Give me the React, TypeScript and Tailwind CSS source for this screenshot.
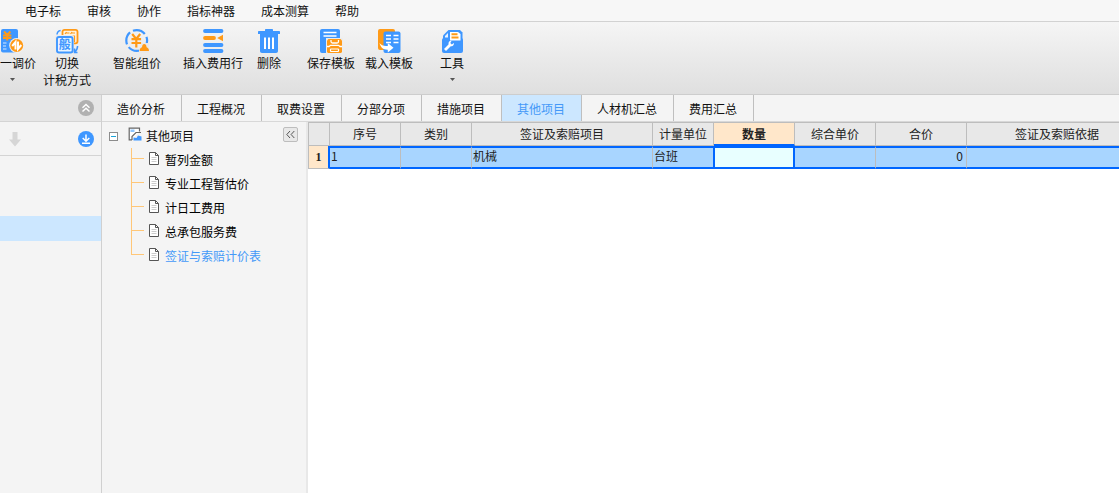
import type { ReactNode } from 'react';
import clsx from 'clsx';

const menus = ['电子标', '审核', '协作', '指标神器', '成本测算', '帮助'];

const tabs = ['造价分析', '工程概况', '取费设置', '分部分项', '措施项目', '其他项目', '人材机汇总', '费用汇总'];

const treeItems = ['暂列金额', '专业工程暂估价', '计日工费用', '总承包服务费', '签证与索赔计价表'];

const columns = [
    { title: '序号', width: 'w-[71px]', value: '1' },
    { title: '类别', width: 'w-[71px]', value: '' },
    { title: '签证及索赔项目', width: 'w-[181px]', value: '机械' },
    { title: '计量单位', width: 'w-[61px]', value: '台班' },
    { title: '数量', width: 'w-[81px]', value: '' },
    { title: '综合单价', width: 'w-[81px]', value: '' },
    { title: '合价', width: 'w-[91px]', value: '0' },
    { title: '签证及索赔依据', width: 'w-[181px]', value: '' }
];

const BLUE = '#3f97ff';
const ORANGE = '#ff9a17';

function Icon({ children }: { children: ReactNode }) {
    return (
        <svg width="24" height="26" viewBox="0 0 24 26" fill="none" aria-hidden="true" className="block shrink-0">
            {children}
        </svg>
    );
}

function AdjustIcon() {
    return (
        <Icon>
            <rect x="1" y="1" width="17" height="23.5" rx="2" fill={BLUE} />
            <path d="M4 3.5l3.2 3.500 3.200-3.500M3 7.500h8.400M3 10h8.400M7.200 7v5.500" stroke={ORANGE} strokeWidth="2" />
            <path d="M3 15h3.500M3 18h3M3 21h3.500" stroke="#d5e9ff" strokeWidth="1.200" />
            <circle cx="16.700" cy="17.500" r="7.500" fill="#f0f0f0" />
            <circle cx="16.700" cy="17.500" r="6.500" fill={ORANGE} />
            <path d="M15.500 21.500V14l-3.300 4M18 13.500V21l3.300-4" stroke="#fff" strokeWidth="2" />
        </Icon>
    );
}

function SwitchIcon() {
    return (
        <Icon>
            <rect x="7.500" y="1.800" width="15" height="13.500" rx="2" fill="#fff3df" stroke={ORANGE} strokeWidth="1.800" />
            <path d="M10 6l1.500-2M11 5h3.500M15.500 6L17 4M16.500 5H20M10.500 8h9v6" stroke={ORANGE} strokeWidth="1.200" />
            <rect x="0" y="7" width="19" height="19" rx="2.500" fill="#ececec" />
            <rect x="2" y="9" width="15.600" height="15.500" rx="2" fill="#eaf4ff" stroke={BLUE} strokeWidth="1.900" />
            <text x="9.800" y="21" fontSize="12" fontWeight="700" textAnchor="middle" fill={BLUE}>般</text>
            <path d="M2 6.500C2.200 4 3.300 2.700 5.600 2.400M22.600 18c-.1 3-1 4.700-3.100 6M19.500 20.500v4h3" stroke={BLUE} strokeWidth="1.500" />
        </Icon>
    );
}

function SmartIcon() {
    return (
        <Icon>
            <circle cx="11.700" cy="12.500" r="10.400" stroke={BLUE} strokeWidth="2.200" strokeDasharray="13 3.300" strokeDashoffset="4" />
            <path d="M14 25v-5l3-5h7v10z" fill="#e9e9e9" />
            <path d="M7.200 6l4 5 4-5M6.500 11.200h9.600M6.500 15h9.600M11.300 11v8.500" stroke={ORANGE} strokeWidth="2.200" />
            <path d="M14.600 23c0-2.200 1-3.400 2.400-3.700.3-2.200 1-3.300 2.300-3.300s2 1.100 2.300 3.300c1.400.3 2.400 1.500 2.400 3.700z" fill={ORANGE} />
        </Icon>
    );
}

function InsertRowIcon() {
    return (
        <Icon>
            <path d="M4 3h16.500M4 17h16.500M4 23h16.500" stroke={BLUE} strokeWidth="3.800" strokeLinecap="round" />
            <path d="M4 10h9" stroke={ORANGE} strokeWidth="3.800" strokeLinecap="round" />
            <path d="M22 6.800v6.400l-5.800-3.200z" fill={ORANGE} />
        </Icon>
    );
}

function DeleteIcon() {
    return (
        <Icon>
            <path d="M8 3V2c0-.6.4-1 1-1h6c.6 0 1 .4 1 1v1h6c.6 0 1 .4 1 1v2H1V4c0-.6.4-1 1-1z" fill={BLUE} />
            <path d="M3 6h18v17c0 1.200-.8 2-2 2H5c-1.200 0-2-.8-2-2z" fill={BLUE} />
            <path d="M8 9.500V21M12 9.500V21M16 9.500V21" stroke="#fff" strokeWidth="2" />
        </Icon>
    );
}

function SaveTemplateIcon() {
    return (
        <Icon>
            <rect x="1" y="1" width="20" height="24" rx="2" fill={BLUE} />
            <path d="M4.500 4.500h13M4.500 8h13" stroke="#fff" strokeWidth="1.300" />
            <path d="M7 10h17v16H7z" fill="#ececec" />
            <path d="M9.500 11h12L23 12.500V24l-1 1H9l-1-1V12.500z" fill={ORANGE} />
            <path d="M12 12v1.500c0 1 .6 1.500 1.500 1.500H18c.9 0 1.500-.5 1.500-1.500V12M8 18.500h2l1.500-1.200h8l1.500 1.200h2" stroke="#fff" strokeWidth="1.300" />
            <rect x="11.500" y="21" width="8" height="2.500" rx=".5" stroke="#fff" strokeWidth="1.200" />
        </Icon>
    );
}

function LoadTemplateIcon() {
    return (
        <Icon>
            <rect x="1" y="1" width="17" height="21" rx="2" fill={ORANGE} />
            <rect x="6.500" y="3.500" width="17" height="21.500" rx="2" fill={BLUE} />
            <path d="M9 7.500h5M9 11h5M9 14.500h5M16.500 7.500h5M16.500 11h5M16.500 14.500h5" stroke="#fff" strokeWidth="1.700" />
            <path d="M2.500 15c1.600 2.500 4.500 3.200 8.300 2.900V15l5.700 4.800-5.700 4.700v-2.800c-4.500.2-7.300-2.400-8.300-6.700z" fill="#fff" />
        </Icon>
    );
}

function ToolsIcon() {
    return (
        <Icon>
            <path d="M3 11V7.500L8.500 2H20l2.500 2.500V14H3z" fill={BLUE} />
            <rect x="2" y="10" width="21" height="15" rx="2" fill={BLUE} />
            <path d="M5 9.500V8l3-3v4.500z" fill="#eaf3ff" />
            <path d="M10 4h8l2.500 2v6.500H10z" fill="#fff" />
            <path d="M11.500 6.300h6M11.500 9.500h7" stroke={ORANGE} strokeWidth="1.900" />
            <path d="M5 22l5-5" stroke="#fff" strokeWidth="2.800" />
            <path d="M11.600 12.800c-2-.3-3.600 1.500-3 3.500.5 1.800 2.700 2.600 4.200 1.500.9-.7 1.300-1.700 1-2.800l-2 1.500-1.500-1.400z" fill="#fff" />
        </Icon>
    );
}

const tools = [
    { lines: ['切换', '计税方式'], icon: <SwitchIcon />, gap: 'ml-[7px]' },
    { lines: ['智能组价'], icon: <SmartIcon />, gap: 'ml-[22px]' },
    { lines: ['插入费用行'], icon: <InsertRowIcon />, gap: 'ml-[22px]' },
    { lines: ['删除'], icon: <DeleteIcon />, gap: 'ml-[14px]' },
    { lines: ['保存模板'], icon: <SaveTemplateIcon />, gap: 'ml-[26px]' },
    { lines: ['载入模板'], icon: <LoadTemplateIcon />, gap: 'ml-[10px]' },
    { lines: ['工具'], icon: <ToolsIcon />, gap: 'ml-[27px]', dropdown: true }
];

function Caret() {
    return (
        <span className="flex h-[17px] w-6 items-center justify-center">
            <svg width="5" height="3" viewBox="0 0 5 3" className="block" aria-hidden="true">
                <path d="M0 0h5L2.500 3z" fill="#555" />
            </svg>
        </span>
    );
}

function Toolbar() {
    return (
        <div className="flex h-[73px] items-start overflow-hidden border-b border-[#cdcdcd] bg-gradient-to-b from-[#f5f5f5] to-[#dfdfdf] pt-1.5 whitespace-nowrap">
            <button className="flex shrink-0 flex-col items-start leading-[17px]">
                <AdjustIcon />
                <span>一调价</span>
                <Caret />
            </button>
            {tools.map((tool) => (
                <button key={tool.lines[0]} className={clsx('flex shrink-0 flex-col items-center leading-[17px]', tool.gap)}>
                    {tool.icon}
                    <span className="flex flex-col">
                        {tool.lines.map((line) => (
                            <span key={line}>{line}</span>
                        ))}
                    </span>
                    {tool.dropdown && <Caret />}
                </button>
            ))}
        </div>
    );
}

function SidePanel() {
    return (
        <aside className="w-[102px] shrink-0 border-r border-[#d0d0d0] bg-[#f4f4f4]">
            <div className="flex h-[27px] items-center justify-end border-b border-[#d4d4d4] bg-[#e6e6e6] pr-[7px]">
                <button aria-label="收起">
                    <svg width="16" height="16" viewBox="0 0 16 16" fill="none" className="block">
                        <circle cx="8" cy="8" r="8" fill="#b1b1b1" />
                        <path d="M4.500 7.700L8 4.500l3.500 3.200M4.500 11.500L8 8.300l3.500 3.200" stroke="#fff" strokeWidth="1.500" />
                    </svg>
                </button>
            </div>
            <div className="flex h-[34px] items-center justify-between border-b border-[#d4d4d4] pr-[7px] pl-[9px]">
                <button aria-label="下移">
                    <svg width="12" height="16" viewBox="0 0 12 16" className="block">
                        <path d="M3.500 1h5v7.500H12L6 15.500 0 8.500h3.500z" fill="#d6d6d6" />
                    </svg>
                </button>
                <button aria-label="下载">
                    <svg width="16" height="16" viewBox="0 0 16 16" fill="none" className="block">
                        <circle cx="8" cy="8" r="8" fill={BLUE} />
                        <path d="M8 3.500v6.500M4.700 7L8 10.200 11.300 7M4 12.200h8" stroke="#fff" strokeWidth="1.500" />
                    </svg>
                </button>
            </div>
            <div className="mt-[60px] h-[25px] bg-[#cce7ff]" />
        </aside>
    );
}

function TabBar() {
    return (
        <div role="tablist" className="flex h-[27px] overflow-hidden border-b border-[#d8d8d8] bg-[#f4f4f4] whitespace-nowrap">
            {tabs.map((tab) => (
                <button
                    key={tab}
                    role="tab"
                    aria-selected={tab === '其他项目'}
                    className={clsx(
                        'shrink-0 border-r border-[#bfbfbf] pr-4 pl-[15px] pt-0.5',
                        tab === '其他项目' && 'bg-[#cce7ff] text-[#4499f8]'
                    )}
                >
                    {tab}
                </button>
            ))}
        </div>
    );
}

function ProjectTree() {
    return (
        <nav className="w-[206px] shrink-0 border-r-2 border-[#e8e8e8] bg-[#f4f4f4] pt-0.5">
            <div className="flex h-6 items-center pr-2 pl-[7px]">
                <button aria-label="折叠" className="flex size-[9px] items-center justify-center border border-[#8c8c8c] bg-white">
                    <span className="h-px w-[5px] bg-[#1aa3d8]" />
                </button>
                <svg width="14" height="14" viewBox="0 0 14 14" fill="none" className="mb-1 ml-2.5" aria-hidden="true">
                    <path d="M11.500 4.500V1.200H1.200v11.600H4" fill="#fff" stroke="#666" strokeWidth="1.200" />
                    <path d="M2.500 2.500h4v2.500h-4z" fill="#8fc6ff" />
                    <path d="M4 13V9.500L8 5.500h5" stroke="#666" strokeWidth="1.200" />
                    <path d="M5.500 13.500v-3l3 .5 1.500-2.500 3.500 1v4z" fill={BLUE} />
                </svg>
                <span className="ml-1 flex-1">其他项目</span>
                <button aria-label="收起目录" className="mb-1 flex size-[15px] items-center justify-center rounded-xs border border-[#bdbdbd] bg-[#e8e8e8]">
                    <svg width="9" height="7" viewBox="0 0 9 7" fill="none" className="block">
                        <path d="M4 0L.8 3.500 4 7M8.300 0L5.100 3.500 8.300 7" stroke="#555" />
                    </svg>
                </button>
            </div>
            <ul>
                {treeItems.map((item, index) => (
                    <li key={item} className="flex h-6 pl-[29px]">
                        <span className="flex w-[13px] flex-col">
                            <span className="h-[11px] border-b border-l border-[#ffc778]" />
                            {index < treeItems.length - 1 && <span className="flex-1 border-l border-[#ffc778]" />}
                        </span>
                        <a href="#" className={clsx('ml-[5px] flex items-center gap-1.5', item === '签证与索赔计价表' ? 'text-[#4499f8]' : 'text-black')}>
                            <svg width="10" height="13" viewBox="0 0 10 13" fill="none" className="mb-1" aria-hidden="true">
                                <path d="M.5.5h6l3 3v9h-9z" fill="#fff" stroke="#555" />
                                <path d="M6.500.5v3h3" stroke="#555" />
                                <path d="M2.500 5.500h5M2.500 7.500h5M2.500 9.500h5" stroke="#ccc" />
                            </svg>
                            {item}
                        </a>
                    </li>
                ))}
            </ul>
        </nav>
    );
}

function CostTable() {
    return (
        <div className="min-w-0 flex-1 overflow-hidden bg-white">
            <table className="w-[840px] min-w-full table-fixed border-separate border-spacing-0 leading-4 text-[#222]">
                <thead>
                    <tr className="h-6">
                        <th className="w-[22px] border border-[#bdbdbd] bg-[#e8e8e8] p-0" />
                        {columns.map((col) => (
                            <th
                                key={col.title}
                                className={clsx(
                                    'border-t border-r border-[#bdbdbd] p-0',
                                    col.width,
                                    col.title === '数量'
                                        ? 'border-b-2 border-b-[#0066ff] bg-[#ffe7ca] font-bold'
                                        : 'border-b bg-[#e8e8e8] font-normal'
                                )}
                            >
                                {col.title}
                            </th>
                        ))}
                    </tr>
                </thead>
                <tbody>
                    <tr className="h-[23px]">
                        <th className="border-r-2 border-b border-l border-[#bdbdbd] border-r-[#0066ff] bg-[#ffe7ca] p-0 font-['Liberation_Serif',serif] font-bold">
                            1
                        </th>
                        {columns.map((col) => (
                            <td
                                key={col.title}
                                className={clsx(
                                    'border-y-2 border-y-[#0066ff] pt-0 pb-[3px]',
                                    col.title === '数量' && 'border-r-2 border-l border-x-[#0066ff] bg-[#e8ffff]',
                                    col.title !== '数量' && 'border-r bg-[#a8d5ff]',
                                    col.title === '计量单位' ? 'border-r-[#0066ff]' : col.title !== '数量' && 'border-r-[#bdbdbd]',
                                    col.title === '合价' ? 'pr-[3px] text-right' : 'pl-px'
                                )}
                            >
                                {col.value}
                            </td>
                        ))}
                    </tr>
                </tbody>
            </table>
        </div>
    );
}

export default function App() {
    return (
        <div className="flex min-h-screen flex-col bg-white font-['Noto_Sans_CJK_SC',sans-serif] text-xs text-[#111]">
            <nav className="flex h-[22px] items-center overflow-hidden border-b border-[#d2d2d2] bg-[#f7f7f7] pl-3 whitespace-nowrap">
                {menus.map((menu) => (
                    <button key={menu} className="shrink-0 px-[13px]">
                        {menu}
                    </button>
                ))}
            </nav>
            <Toolbar />
            <div className="flex flex-1">
                <SidePanel />
                <div className="flex min-w-0 flex-1 flex-col">
                    <TabBar />
                    <div className="flex flex-1">
                        <ProjectTree />
                        <CostTable />
                    </div>
                </div>
            </div>
        </div>
    );
}
